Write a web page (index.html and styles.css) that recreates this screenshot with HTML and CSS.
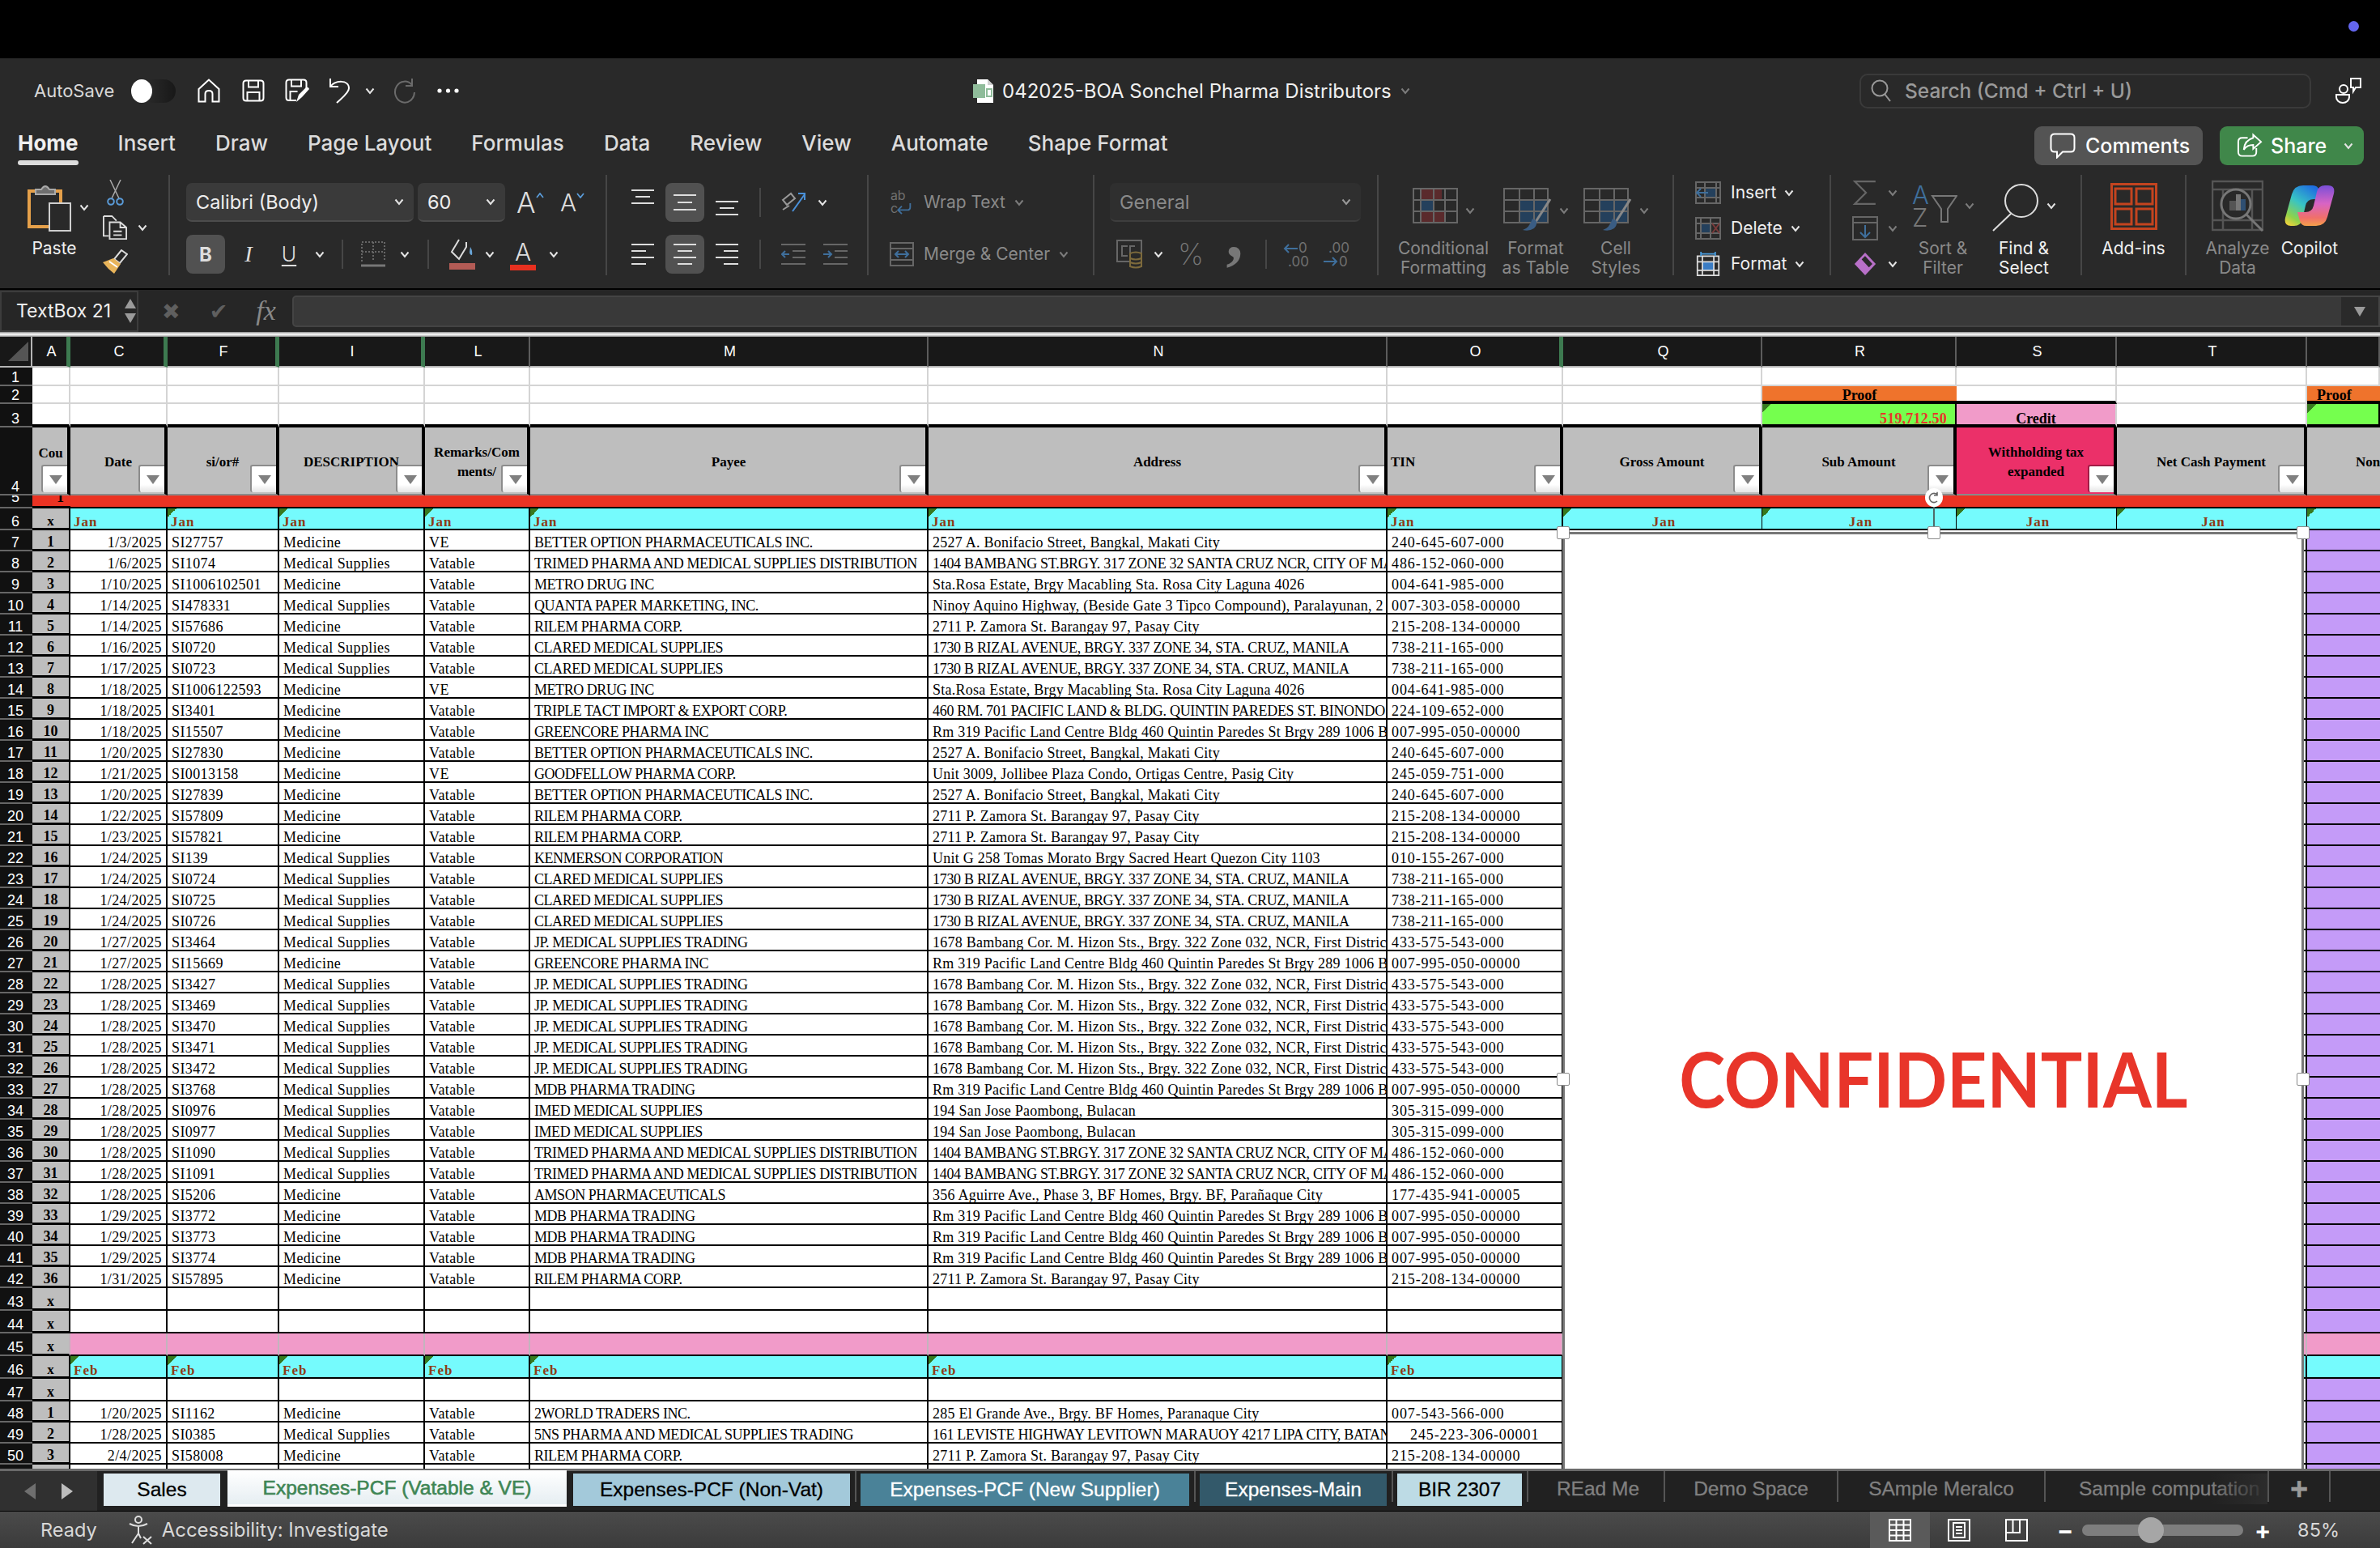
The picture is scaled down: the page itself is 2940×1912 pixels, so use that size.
FILE: index.html
```html
<!DOCTYPE html>
<html lang="en">
<head>
    <meta charset="UTF-8">
    <title>042025-BOA Sonchel Pharma Distributors</title>
    <link rel="stylesheet" href="styles.css">
</head>
<body>
    <!-- icon sprite -->
    <svg class="sprite" xmlns="http://www.w3.org/2000/svg">
        <defs>
            <linearGradient id="cpA" x1="0.7" y1="0" x2="0.1" y2="1"><stop offset="0" stop-color="#1f6fe0"/><stop offset="0.45" stop-color="#38c4c4"/><stop offset="0.8" stop-color="#8fd24a"/><stop offset="1" stop-color="#f4d23c"/></linearGradient>
            <linearGradient id="cpB" x1="0.5" y1="0" x2="0.5" y2="1"><stop offset="0" stop-color="#7a4fd8"/><stop offset="0.45" stop-color="#d864c4"/><stop offset="0.8" stop-color="#f0706a"/><stop offset="1" stop-color="#f5a04a"/></linearGradient>
        </defs>
        <symbol id="chev" viewBox="0 0 12 9"><path d="M1.5 1.5 6 7l4.5-5.5" fill="none" stroke="currentColor" stroke-width="2"/></symbol>
        <symbol id="home" viewBox="0 0 28 30"><path d="M1.5 13 14 1.5 26.500 13v15.500h-8V19q0-4-4.500-4t-4.500 4v9.500h-8z" fill="none" stroke="#fff" stroke-width="2"/></symbol>
        <symbol id="save" viewBox="0 0 28 28"><path d="M5 1.500h18q3.500 0 3.500 3.500v18q0 3.500-3.500 3.500H5q-3.500 0-3.500-3.500V5Q1.500 1.500 5 1.500zM8 1.500v8h12v-8M6.500 26.500V16h15v10.500" fill="none" stroke="#fff" stroke-width="2"/></symbol>
        <symbol id="saveas" viewBox="0 0 30 30"><path d="M14 27H5q-3.500 0-3.500-3.500V5Q1.500 1.500 5 1.500h18q3.500 0 3.500 3.500v7M8 1.500v8h12v-8M6.500 26V16h9" fill="none" stroke="#fff" stroke-width="2"/><path d="M14 29l3-9 9-9q3-1 4 2l-9 10z" fill="#fff"/></symbol>
        <symbol id="undo" viewBox="0 0 28 32"><path d="M2 1v10h10M2 11C8 3 25 2 25 13c0 6-10 13-15 18" fill="none" stroke="#fff" stroke-width="2"/></symbol>
        <symbol id="redo" viewBox="0 0 28 32"><path d="M23 9A12 13 0 1 0 26 18M23 1v9h-8" fill="none" stroke="#6a6a6a" stroke-width="2"/></symbol>
        <symbol id="dots" viewBox="0 0 27 6"><circle cx="3" cy="3" r="2.600" fill="#fff"/><circle cx="13.500" cy="3" r="2.600" fill="#fff"/><circle cx="24" cy="3" r="2.600" fill="#fff"/></symbol>
        <symbol id="xls" viewBox="0 0 25 29"><path d="M5 0h13l7 7v22H5z" fill="#fff"/><path d="M18 0l7 7h-7z" fill="#cfcfcf"/><path d="M0 6h15v17H0z" fill="#8fbc9a"/><path d="M17 12h6v9h-6z" fill="none" stroke="#8fbc9a" stroke-width="2"/></symbol>
        <symbol id="search" viewBox="0 0 26 28"><circle cx="11" cy="11" r="9.500" fill="none" stroke="#999" stroke-width="2"/><path d="M17 18l7 9" stroke="#999" stroke-width="2"/></symbol>
        <symbol id="people" viewBox="0 0 34 32"><circle cx="11" cy="14" r="5" fill="none" stroke="#fff" stroke-width="2"/><path d="M2 21h16v3a8 7 0 0 1-16 0z" fill="none" stroke="#fff" stroke-width="2"/><path d="M20 1h12v11h-6l-3 5v-5h-3z" fill="none" stroke="#fff" stroke-width="2"/></symbol>
        <symbol id="bubble" viewBox="0 0 32 32"><path d="M6 1.500h20q4.500 0 4.500 4.500v13q0 4.500-4.500 4.500H16l-7 7v-7H6q-4.500 0-4.500-4.500V6q0-4.500 4.500-4.500z" fill="none" stroke="#fff" stroke-width="2"/></symbol>
        <symbol id="share" viewBox="0 0 33 30"><path d="M14 5H7Q2 5 2 10v13q0 5 5 5h13q5 0 5-5v-5" fill="none" stroke="#fff" stroke-width="2"/><path d="M21 1l10 9-10 9v-5q-8 0-12 6 1-12 12-15z" fill="none" stroke="#fff" stroke-width="2"/></symbol>
        <symbol id="paste" viewBox="0 0 54 60"><path d="M10 10H2v44h25M32 10h9v14" fill="none" stroke="#e5a04a" stroke-width="4"/><path d="M10 14V8h7q5-8 10 0h7v6z" fill="#6f6f6f" stroke="#aaa" stroke-width="2"/><rect x="27" y="25" width="26" height="34" fill="#292929" stroke="#cfcfcf" stroke-width="2"/></symbol>
        <symbol id="cut" viewBox="0 0 21 32"><path d="M4 0l11 23M17 0 6 23" fill="none" stroke="#aaa" stroke-width="1.500"/><circle cx="5" cy="27" r="3.800" fill="none" stroke="#5a9bd8" stroke-width="2"/><circle cx="16" cy="27" r="3.800" fill="none" stroke="#5a9bd8" stroke-width="2"/></symbol>
        <symbol id="copy" viewBox="0 0 32 32"><path d="M1 1h11l6 6M1 1v26h7" fill="none" stroke="#ddd" stroke-width="2"/><path d="M9 9h14l8 7v15H9zM23 9v7h8M14 21h11M14 26h11" fill="none" stroke="#ddd" stroke-width="2"/></symbol>
        <symbol id="painter" viewBox="0 0 32 30"><path d="M24 1l7 5-9 11-7-5z" fill="none" stroke="#ddd" stroke-width="2"/><path d="M1 16l13-5 9 7-8 12q-8-6-14-14z" fill="#e8b45a"/><path d="M9 15l10 7" stroke="#fff" stroke-width="2"/></symbol>
        <symbol id="caret-up" viewBox="0 0 10 7"><path d="M1 6l4-5 4 5" fill="none" stroke="#5a9bd8" stroke-width="1.800"/></symbol>
        <symbol id="caret-dn" viewBox="0 0 10 7"><path d="M1 1l4 5 4-5" fill="none" stroke="#5a9bd8" stroke-width="1.800"/></symbol>
        <symbol id="borders" viewBox="0 0 30 32"><path d="M1 1h28M1 13h28M1 25V1M15 1v24M29 1v24" fill="none" stroke="#666" stroke-width="2" stroke-dasharray="2 2"/><path d="M0 30h30" stroke="#777" stroke-width="3"/></symbol>
        <symbol id="fill" viewBox="0 0 32 38"><path d="M12 1l-9 15 9 9 9-15V4" fill="none" stroke="#ddd" stroke-width="2"/><path d="M26 10q3 5 2 10-3 0-3-4z" fill="#6aa6d8"/><rect y="30" width="32" height="8" fill="#b35b55"/></symbol>
        <symbol id="va-top" viewBox="0 0 28 48"><path d="M0 9h28M5 17h18M0 25h28" stroke="#ddd" stroke-width="2"/></symbol>
        <symbol id="va-mid" viewBox="0 0 28 48"><path d="M0 15h28M5 24h18M0 33h28" stroke="#ddd" stroke-width="2"/></symbol>
        <symbol id="va-bot" viewBox="0 0 28 48"><path d="M0 23h28M5 31h18M0 39h28" stroke="#ddd" stroke-width="2"/></symbol>
        <symbol id="ha-left" viewBox="0 0 28 28"><path d="M0 2h28M0 10h18M0 18h28M0 26h18" stroke="#ddd" stroke-width="2"/></symbol>
        <symbol id="ha-mid" viewBox="0 0 28 28"><path d="M0 2h28M5 10h18M0 18h28M5 26h18" stroke="#ddd" stroke-width="2"/></symbol>
        <symbol id="ha-right" viewBox="0 0 28 28"><path d="M0 2h28M10 10h18M0 18h28M10 26h18" stroke="#ddd" stroke-width="2"/></symbol>
        <symbol id="orient" viewBox="0 0 32 30"><path d="M3 12l10-8 5 6-10 8zM3 24l8-5" fill="none" stroke="#999" stroke-width="2"/><path d="M15 26 30 5M22 4h8v8" fill="none" stroke="#4a90d8" stroke-width="2"/></symbol>
        <symbol id="ind-dec" viewBox="0 0 30 28"><path d="M0 2h30M14 10h16M14 18h16M0 26h30" stroke="#666" stroke-width="2"/><path d="M10 14H1M5 10l-4 4 4 4" fill="none" stroke="#3f6f9c" stroke-width="2"/></symbol>
        <symbol id="ind-inc" viewBox="0 0 30 28"><path d="M0 2h30M14 10h16M14 18h16M0 26h30" stroke="#666" stroke-width="2"/><path d="M0 14h9M6 10l4 4-4 4" fill="none" stroke="#3f6f9c" stroke-width="2"/></symbol>
        <symbol id="merge" viewBox="0 0 30 30"><rect x="1" y="1" width="28" height="28" fill="none" stroke="#666" stroke-width="2"/><path d="M1 8h28M1 22h28" stroke="#666" stroke-width="2"/><path d="M7 15h16M11 11l-4 4 4 4M19 11l4 4-4 4" fill="none" stroke="#3f6f9c" stroke-width="2"/></symbol>
        <symbol id="acct" viewBox="0 0 32 36"><rect x="1" y="1" width="30" height="26" fill="none" stroke="#666" stroke-width="2"/><path d="M14 8H7v12h7M23 8h-6v12h6" fill="none" stroke="#666" stroke-width="2"/><path d="M17 17q7-3 14 0v16q-7 3-14 0z" fill="#292929" stroke="#7d6a3c" stroke-width="2"/><path d="M17 23q7 3 14 0M17 28q7 3 14 0" fill="none" stroke="#7d6a3c" stroke-width="2"/></symbol>
        <symbol id="cond" viewBox="0 0 56 44"><path d="M10 1h26v14H10zM10 29h30v14H10z" fill="#5a2a2c"/><path d="M10 15h16v14H10z" fill="#24405c"/><path d="M1 1h54v42H1zM1 15h54M1 29h54M10 1v42M26 1v42M40 1v42" fill="none" stroke="#666" stroke-width="2"/></symbol>
        <symbol id="fmt-table" viewBox="0 0 60 54"><path d="M20 15h36v28H20z" fill="#24405c"/><path d="M1 1h54v42H1zM1 15h54M1 29h54M20 1v42M38 1v42" fill="none" stroke="#666" stroke-width="2"/><path d="M58 14 40 42" stroke="#888" stroke-width="3"/><path d="M36 38q-4 12-12 14 8 2 14-2 4-4 3-9z" fill="#3a5d84"/></symbol>
        <symbol id="cell-ins" viewBox="0 0 32 28"><path d="M12 8h14v12H12z" fill="#24405c"/><path d="M1 1h30v26H1zM1 8h30M1 20h30M12 1v26M26 1v26" fill="none" stroke="#666" stroke-width="2"/><path d="M16 14H2M7 9l-5 5 5 5" fill="none" stroke="#3f6f9c" stroke-width="2"/></symbol>
        <symbol id="cell-del" viewBox="0 0 32 28"><path d="M7 8h12v12H7z" fill="#24405c"/><path d="M1 1h30v26H1zM1 8h30M1 20h30M7 1v26M19 1v26" fill="none" stroke="#666" stroke-width="2"/><path d="M21 8l9 12M30 8l-9 12" stroke="#7a3a3a" stroke-width="2"/></symbol>
        <symbol id="cell-fmt" viewBox="0 0 32 34"><path d="M8 14h16v12H8z" fill="#3a7cc4"/><path d="M1 6h30v27H1zM1 14h30M1 26h30M8 6v27M24 6v27" fill="none" stroke="#ddd" stroke-width="2"/><path d="M6 3h20M6 0v6M26 0v6" fill="none" stroke="#4a9ee0" stroke-width="2"/></symbol>
        <symbol id="sigma" viewBox="0 0 26 28"><path d="M25 1H1l13 13L1 27h24" fill="none" stroke="#666" stroke-width="2"/></symbol>
        <symbol id="filldown" viewBox="0 0 32 30"><path d="M1 1h30v28H1zM1 8h30" fill="none" stroke="#666" stroke-width="2"/><path d="M16 11v15M10 20l6 6 6-6" fill="none" stroke="#3f6f9c" stroke-width="2"/></symbol>
        <symbol id="eraser" viewBox="0 0 30 32"><path d="M15 1l14 15-14 15L1 16z" fill="#b870c8"/><path d="M15 4l11 12-6 6L9 10z" fill="#292929" stroke="#b870c8" stroke-width="2"/></symbol>
        <symbol id="find" viewBox="0 0 58 60"><circle cx="36" cy="22" r="20" fill="none" stroke="#ddd" stroke-width="2"/><path d="M23 38 1 59" stroke="#ddd" stroke-width="2"/></symbol>
        <symbol id="addins" viewBox="0 0 58 58"><path d="M1.500 1.500h55v55h-55zM6 7h20v19H6zM32 7h20v19H32zM6 32h20v19H6zM32 32h20v19H32z" fill="none" stroke="#c4441f" stroke-width="3"/></symbol>
        <symbol id="analyze" viewBox="0 0 64 64"><path d="M1 2h62v60H1zM1 12h62M1 50h62M14 12v50M50 12v50" fill="none" stroke="#555" stroke-width="2.500"/><circle cx="30" cy="30" r="18" fill="#292929" stroke="#777" stroke-width="3"/><path d="M22 26h8v12h-8z" fill="#555"/><path d="M30 18h6v20h-6z" fill="#777"/><path d="M36 24h6v14h-6z" fill="#2f4f72"/><path d="M43 43l20 20" stroke="#777" stroke-width="3"/></symbol>
        <symbol id="copilot" viewBox="0 0 62 52"><path d="M23 1h12q6 0 8 6l3 11H36q-8 0-10 8l-4 17q-2 8-10 8H8Q-1 51 1 41L9 12Q12 1 23 1z" fill="url(#cpA)"/><path d="M39 51H27q-6 0-8-6l-3-11h10q8 0 10-8l4-17q2-8 10-8h4q9 0 7 10l-8 29q-3 11-14 11z" fill="url(#cpB)"/></symbol>
        <symbol id="access" viewBox="0 0 32 36"><circle cx="13" cy="5" r="4" fill="none" stroke="#ddd" stroke-width="2"/><path d="M2 10q11 6 22 0M13 12v10l-8 12M13 22l3 6" fill="none" stroke="#ddd" stroke-width="2"/><path d="M19 26l10 9M29 26l-10 9" stroke="#ddd" stroke-width="2"/></symbol>
        <symbol id="v-grid" viewBox="0 0 28 28"><path d="M1 1h26v26H1zM1 7.500h26M1 14h26M1 20.500h26M9.500 1v26M18.500 1v26" fill="none" stroke="#fff" stroke-width="2"/></symbol>
        <symbol id="v-page" viewBox="0 0 28 28"><path d="M1 1h26v26H1zM7 5h14v18H7zM10 10h8M10 14h8M10 18h8" fill="none" stroke="#fff" stroke-width="2"/></symbol>
        <symbol id="v-break" viewBox="0 0 28 28"><path d="M1 1h26v26H1zM1 17h17V1M9.500 1v16" fill="none" stroke="#fff" stroke-width="2"/></symbol>
        <symbol id="rotate" viewBox="0 0 20 20"><path d="M15 5A7 7 0 1 0 15 15M15 1v5h-5" fill="none" stroke="#666" stroke-width="2"/></symbol>
    </svg>

    <div class="topbar"><span class="dot"></span></div>

    <!-- autosave row -->
    <div class="qat">
        <div class="qat-left">
            <span class="autosave">AutoSave</span>
            <span class="toggle"><i></i></span>
            <svg class="q-home"><use href="#home"/></svg>
            <svg class="q-save"><use href="#save"/></svg>
            <svg class="q-saveas"><use href="#saveas"/></svg>
            <svg class="q-undo"><use href="#undo"/></svg>
            <svg class="chev q-chev"><use href="#chev"/></svg>
            <svg class="q-redo"><use href="#redo"/></svg>
            <svg class="q-dots"><use href="#dots"/></svg>
        </div>
        <div class="title">
            <svg class="t-xls"><use href="#xls"/></svg>
            <span>042025-BOA Sonchel Pharma Distributors</span>
            <svg class="chev dim"><use href="#chev"/></svg>
        </div>
        <div class="searchbox">
            <svg class="s-ic"><use href="#search"/></svg>
            <span>Search (Cmd + Ctrl + U)</span>
        </div>
        <svg class="q-people"><use href="#people"/></svg>
    </div>

    <!-- ribbon tabs -->
    <div class="tabs">
        <span class="tab on">Home</span>
        <span class="tab">Insert</span>
        <span class="tab">Draw</span>
        <span class="tab">Page Layout</span>
        <span class="tab">Formulas</span>
        <span class="tab">Data</span>
        <span class="tab">Review</span>
        <span class="tab">View</span>
        <span class="tab">Automate</span>
        <span class="tab">Shape Format</span>
        <div class="tab-right">
            <div class="btn-comments"><svg class="b-ic"><use href="#bubble"/></svg><span>Comments</span></div>
            <div class="btn-share"><svg class="b-ic"><use href="#share"/></svg><span>Share</span><svg class="chev"><use href="#chev"/></svg></div>
        </div>
    </div>

    <!-- ribbon -->
    <div class="ribbon">
        <div class="g g-clip">
            <div class="paste">
                <div class="paste-top"><svg class="i-paste"><use href="#paste"/></svg><svg class="chev"><use href="#chev"/></svg></div>
                <span class="lbl on paste-lbl">Paste</span>
            </div>
            <div class="tools">
                <svg class="i-cut"><use href="#cut"/></svg>
                <div class="tool-row"><svg class="i-32"><use href="#copy"/></svg><svg class="chev"><use href="#chev"/></svg></div>
                <svg class="i-painter"><use href="#painter"/></svg>
            </div>
        </div>

        <div class="g g-font">
            <div class="row">
                <div class="combo w281"><span>Calibri (Body)</span><svg class="chev"><use href="#chev"/></svg></div>
                <div class="combo w108"><span>60</span><svg class="chev"><use href="#chev"/></svg></div>
                <div class="size-a grow"><span>A</span><svg class="i-caret"><use href="#caret-up"/></svg></div>
                <div class="size-a shrink"><span>A</span><svg class="i-caret"><use href="#caret-dn"/></svg></div>
            </div>
            <div class="row font-tools">
                <span class="tbtn act f-b">B</span>
                <span class="f-i">I</span>
                <span class="f-u">U</span>
                <svg class="chev"><use href="#chev"/></svg>
                <i class="vsep"></i>
                <svg class="i-borders"><use href="#borders"/></svg>
                <svg class="chev"><use href="#chev"/></svg>
                <i class="vsep"></i>
                <svg class="i-fill"><use href="#fill"/></svg>
                <svg class="chev"><use href="#chev"/></svg>
                <span class="f-color">A</span>
                <svg class="chev"><use href="#chev"/></svg>
            </div>
        </div>

        <div class="g g-align">
            <div class="row align-row">
                <svg class="i-va"><use href="#va-top"/></svg>
                <span class="tbtn act"><svg class="i-va"><use href="#va-mid"/></svg></span>
                <svg class="i-va"><use href="#va-bot"/></svg>
                <i class="vsep"></i>
                <svg class="i-orient"><use href="#orient"/></svg>
                <svg class="chev left"><use href="#chev"/></svg>
            </div>
            <div class="row align-row">
                <svg class="i-ha"><use href="#ha-left"/></svg>
                <span class="tbtn act"><svg class="i-ha"><use href="#ha-mid"/></svg></span>
                <svg class="i-ha"><use href="#ha-right"/></svg>
                <i class="vsep"></i>
                <svg class="i-ind"><use href="#ind-dec"/></svg>
                <svg class="i-ind"><use href="#ind-inc"/></svg>
            </div>
        </div>

        <div class="g g-wrap">
            <div class="row wrapline">
                <svg class="i-30" viewBox="0 0 30 34"><text x="0" y="14" class="ic-txt">ab</text><text x="0" y="31" class="ic-txt">c</text><path d="M26 18v5q0 4-4 4H11M15 22l-5 5 5 5" fill="none" stroke="#3f6f9c" stroke-width="2"/></svg>
                <span class="lbl">Wrap Text</span><svg class="chev dim"><use href="#chev"/></svg>
            </div>
            <div class="row wrapline"><svg class="i-30"><use href="#merge"/></svg><span class="lbl">Merge &amp; Center</span><svg class="chev dim"><use href="#chev"/></svg></div>
        </div>

        <div class="g g-num">
            <div class="row"><div class="combo general"><span>General</span><svg class="chev"><use href="#chev"/></svg></div></div>
            <div class="row num-tools">
                <svg class="i-acct"><use href="#acct"/></svg>
                <svg class="chev"><use href="#chev"/></svg>
                <span class="n-pct">%</span>
                <span class="n-comma">,</span>
                <i class="vsep"></i>
                <svg class="i-dec" viewBox="0 0 34 34"><path d="M18 10H2M7 5l-5 5 5 5" fill="none" stroke="#3f6f9c" stroke-width="2"/><text x="19" y="15" class="ic-txt">0</text><text x="6" y="32" class="ic-txt">.00</text></svg>
                <svg class="i-dec" viewBox="0 0 34 34"><text x="6" y="15" class="ic-txt">.00</text><path d="M0 26h16M11 21l5 5-5 5" fill="none" stroke="#3f6f9c" stroke-width="2"/><text x="19" y="32" class="ic-txt">0</text></svg>
            </div>
        </div>

        <div class="g g-styles">
            <div class="big w114">
                <div class="big-ic low"><svg class="i-cond"><use href="#cond"/></svg><svg class="chev dim"><use href="#chev"/></svg></div>
                <span class="lbl">Conditional<br>Formatting</span>
            </div>
            <div class="big w114">
                <div class="big-ic low"><svg class="i-table"><use href="#fmt-table"/></svg><svg class="chev dim"><use href="#chev"/></svg></div>
                <span class="lbl">Format<br>as Table</span>
            </div>
            <div class="big w84">
                <div class="big-ic low"><svg class="i-table"><use href="#fmt-table"/></svg><svg class="chev dim"><use href="#chev"/></svg></div>
                <span class="lbl">Cell<br>Styles</span>
            </div>
        </div>

        <div class="g g-cells">
            <div class="cellrow"><svg class="i-32"><use href="#cell-ins"/></svg><span class="lbl on">Insert</span><svg class="chev"><use href="#chev"/></svg></div>
            <div class="cellrow"><svg class="i-32"><use href="#cell-del"/></svg><span class="lbl on">Delete</span><svg class="chev"><use href="#chev"/></svg></div>
            <div class="cellrow"><svg class="i-32"><use href="#cell-fmt"/></svg><span class="lbl on">Format</span><svg class="chev"><use href="#chev"/></svg></div>
        </div>

        <div class="g g-edit">
            <div class="edit-small">
                <div class="cellrow"><svg class="i-32"><use href="#sigma"/></svg><svg class="chev dim"><use href="#chev"/></svg></div>
                <div class="cellrow"><svg class="i-32"><use href="#filldown"/></svg><svg class="chev dim"><use href="#chev"/></svg></div>
                <div class="cellrow"><svg class="i-32"><use href="#eraser"/></svg><svg class="chev"><use href="#chev"/></svg></div>
            </div>
            <div class="big w100">
                <div class="big-ic">
                    <svg class="i-sort" viewBox="0 0 56 54"><text x="0" y="24" class="ic-sort az-a">A</text><text x="0" y="52" class="ic-sort az-z">Z</text><path d="M25 14h30L44 30v16h-8V30z" fill="none" stroke="#777" stroke-width="2"/></svg>
                    <svg class="chev dim"><use href="#chev"/></svg>
                </div>
                <span class="lbl">Sort &amp;<br>Filter</span>
            </div>
            <div class="big w100">
                <div class="big-ic"><svg class="i-find"><use href="#find"/></svg><svg class="chev"><use href="#chev"/></svg></div>
                <span class="lbl on">Find &amp;<br>Select</span>
            </div>
        </div>

        <div class="g g-addins">
            <div class="big">
                <div class="big-ic"><svg class="i-addins"><use href="#addins"/></svg></div>
                <span class="lbl on">Add-ins</span>
            </div>
        </div>

        <div class="g g-last">
            <div class="big w96">
                <div class="big-ic"><svg class="i-analyze"><use href="#analyze"/></svg></div>
                <span class="lbl">Analyze<br>Data</span>
            </div>
            <div class="big w82">
                <div class="big-ic"><svg class="i-copilot"><use href="#copilot"/></svg></div>
                <span class="lbl on">Copilot</span>
            </div>
        </div>
    </div>

    <!-- formula bar -->
    <div class="fbar">
        <div class="namebox"><span>TextBox 21</span><span class="spin"><i class="up"></i><i class="dn"></i></span></div>
        <span class="fb-x">✖</span>
        <span class="fb-ok">✔</span>
        <span class="fb-fx">fx</span>
        <div class="fb-input"><span class="fb-drop"><i class="dn"></i></span></div>
    </div>
    <div class="splitline"></div>

    <!-- worksheet -->
    <div class="sheet">
        <table class="grid">
            <colgroup>
                <col class="c-rn"><col class="c-a"><col class="c-c"><col class="c-f"><col class="c-i"><col class="c-l"><col class="c-m"><col class="c-n"><col class="c-o"><col class="c-q"><col class="c-r"><col class="c-s"><col class="c-t"><col class="c-u">
            </colgroup>
            <thead>
                <tr>
                    <th class="corner"><svg class="i-corner" viewBox="0 0 25 24"><path d="M25 0v24H0z" fill="#555"/></svg></th>
                    <th class="sel">A</th><th class="sel">C</th><th class="sel">F</th><th class="sel">I</th><th>L</th><th>M</th><th>N</th><th class="sel">O</th><th>Q</th><th>R</th><th>S</th><th>T</th><th></th>
                </tr>
            </thead>
            <tbody>
                <tr class="blank r1"><th>1</th><td></td><td></td><td></td><td></td><td></td><td></td><td></td><td></td><td></td><td></td><td></td><td></td><td></td></tr>
                <tr class="blank r2"><th>2</th><td></td><td></td><td></td><td></td><td></td><td></td><td></td><td></td><td></td><td class="proof">Proof</td><td class="topline"></td><td></td><td class="proof left">Proof</td></tr>
                <tr class="blank r3"><th>3</th><td></td><td></td><td></td><td></td><td></td><td></td><td></td><td></td><td></td><td class="green tri">519,712.50</td><td class="credit">Credit</td><td></td><td class="green tri"></td></tr>
                <tr class="heads">
                    <th>4</th>
                    <td>Cou<br>nt<span class="fbtn"></span></td>
                    <td>Date<span class="fbtn"></span></td>
                    <td>si/or#<span class="fbtn"></span></td>
                    <td>DESCRIPTION<span class="fbtn"></span></td>
                    <td>Remarks/Com<br>ments/<span class="fbtn"></span></td>
                    <td>Payee<span class="fbtn"></span></td>
                    <td>Address<span class="fbtn"></span></td>
                    <td class="left">TIN<span class="fbtn"></span></td>
                    <td>Gross Amount<span class="fbtn"></span></td>
                    <td>Sub Amount<span class="fbtn"></span></td>
                    <td class="wtax">Withholding tax<br>expanded<span class="fbtn"></span></td>
                    <td>Net Cash Payment<span class="fbtn"></span></td>
                    <td class="left non">Non</td>
                </tr>
                <tr class="redrow"><th>5</th><td class="redcount">1</td><td colspan="12"></td></tr>
                <tr class="month">
                    <th>6</th><td class="cnt">x</td><td>Jan</td><td class="tri">Jan</td><td class="tri">Jan</td><td class="tri">Jan</td><td class="tri">Jan</td><td class="tri">Jan</td><td class="tri">Jan</td><td class="tri ctr">Jan</td><td class="tri ctr">Jan</td><td class="tri ctr">Jan</td><td class="tri ctr">Jan</td><td class="tri"></td>
                </tr>
                <tr class="data"><th>7</th><td>1</td><td>1/3/2025</td><td>SI27757</td><td>Medicine</td><td>VE</td><td>BETTER OPTION PHARMACEUTICALS INC.</td><td>2527 A. Bonifacio Street, Bangkal, Makati City</td><td>240-645-607-000</td><td colspan="4"></td><td></td></tr>
                <tr class="data"><th>8</th><td>2</td><td>1/6/2025</td><td>SI1074</td><td>Medical Supplies</td><td>Vatable</td><td>TRIMED PHARMA AND MEDICAL SUPPLIES DISTRIBUTION</td><td class="caps">1404 BAMBANG ST.BRGY. 317 ZONE 32 SANTA CRUZ NCR, CITY OF MANILA</td><td>486-152-060-000</td><td colspan="4"></td><td></td></tr>
                <tr class="data"><th>9</th><td>3</td><td>1/10/2025</td><td>SI1006102501</td><td>Medicine</td><td>Vatable</td><td>METRO DRUG INC</td><td>Sta.Rosa Estate, Brgy Macabling Sta. Rosa City Laguna 4026</td><td>004-641-985-000</td><td colspan="4"></td><td></td></tr>
                <tr class="data"><th>10</th><td>4</td><td>1/14/2025</td><td>SI478331</td><td>Medical Supplies</td><td>Vatable</td><td>QUANTA PAPER MARKETING, INC.</td><td>Ninoy Aquino Highway, (Beside Gate 3 Tipco Compound), Paralayunan, 2</td><td>007-303-058-00000</td><td colspan="4"></td><td></td></tr>
                <tr class="data"><th>11</th><td>5</td><td>1/14/2025</td><td>SI57686</td><td>Medicine</td><td>Vatable</td><td>RILEM PHARMA CORP.</td><td>2711 P. Zamora St. Barangay 97, Pasay City</td><td>215-208-134-00000</td><td colspan="4"></td><td></td></tr>
                <tr class="data"><th>12</th><td>6</td><td>1/16/2025</td><td>SI0720</td><td>Medical Supplies</td><td>Vatable</td><td>CLARED MEDICAL SUPPLIES</td><td class="caps">1730 B RIZAL AVENUE, BRGY. 337 ZONE 34, STA. CRUZ, MANILA</td><td>738-211-165-000</td><td colspan="4"></td><td></td></tr>
                <tr class="data"><th>13</th><td>7</td><td>1/17/2025</td><td>SI0723</td><td>Medical Supplies</td><td>Vatable</td><td>CLARED MEDICAL SUPPLIES</td><td class="caps">1730 B RIZAL AVENUE, BRGY. 337 ZONE 34, STA. CRUZ, MANILA</td><td>738-211-165-000</td><td colspan="4"></td><td></td></tr>
                <tr class="data"><th>14</th><td>8</td><td>1/18/2025</td><td>SI1006122593</td><td>Medicine</td><td>VE</td><td>METRO DRUG INC</td><td>Sta.Rosa Estate, Brgy Macabling Sta. Rosa City Laguna 4026</td><td>004-641-985-000</td><td colspan="4"></td><td></td></tr>
                <tr class="data"><th>15</th><td>9</td><td>1/18/2025</td><td>SI3401</td><td>Medicine</td><td>Vatable</td><td>TRIPLE TACT IMPORT &amp; EXPORT CORP.</td><td class="caps">460 RM. 701 PACIFIC LAND &amp; BLDG. QUINTIN PAREDES ST. BINONDO</td><td>224-109-652-000</td><td colspan="4"></td><td></td></tr>
                <tr class="data"><th>16</th><td>10</td><td>1/18/2025</td><td>SI15507</td><td>Medicine</td><td>Vatable</td><td>GREENCORE PHARMA INC</td><td>Rm 319 Pacific Land Centre Bldg 460 Quintin Paredes St Brgy 289 1006 Binondo</td><td>007-995-050-00000</td><td colspan="4"></td><td></td></tr>
                <tr class="data"><th>17</th><td>11</td><td>1/20/2025</td><td>SI27830</td><td>Medicine</td><td>Vatable</td><td>BETTER OPTION PHARMACEUTICALS INC.</td><td>2527 A. Bonifacio Street, Bangkal, Makati City</td><td>240-645-607-000</td><td colspan="4"></td><td></td></tr>
                <tr class="data"><th>18</th><td>12</td><td>1/21/2025</td><td>SI0013158</td><td>Medicine</td><td>VE</td><td>GOODFELLOW PHARMA CORP.</td><td>Unit 3009, Jollibee Plaza Condo, Ortigas Centre, Pasig City</td><td>245-059-751-000</td><td colspan="4"></td><td></td></tr>
                <tr class="data"><th>19</th><td>13</td><td>1/20/2025</td><td>SI27839</td><td>Medicine</td><td>Vatable</td><td>BETTER OPTION PHARMACEUTICALS INC.</td><td>2527 A. Bonifacio Street, Bangkal, Makati City</td><td>240-645-607-000</td><td colspan="4"></td><td></td></tr>
                <tr class="data"><th>20</th><td>14</td><td>1/22/2025</td><td>SI57809</td><td>Medicine</td><td>Vatable</td><td>RILEM PHARMA CORP.</td><td>2711 P. Zamora St. Barangay 97, Pasay City</td><td>215-208-134-00000</td><td colspan="4"></td><td></td></tr>
                <tr class="data"><th>21</th><td>15</td><td>1/23/2025</td><td>SI57821</td><td>Medicine</td><td>Vatable</td><td>RILEM PHARMA CORP.</td><td>2711 P. Zamora St. Barangay 97, Pasay City</td><td>215-208-134-00000</td><td colspan="4"></td><td></td></tr>
                <tr class="data"><th>22</th><td>16</td><td>1/24/2025</td><td>SI139</td><td>Medical Supplies</td><td>Vatable</td><td>KENMERSON CORPORATION</td><td>Unit G 258 Tomas Morato Brgy Sacred Heart Quezon City 1103</td><td>010-155-267-000</td><td colspan="4"></td><td></td></tr>
                <tr class="data"><th>23</th><td>17</td><td>1/24/2025</td><td>SI0724</td><td>Medical Supplies</td><td>Vatable</td><td>CLARED MEDICAL SUPPLIES</td><td class="caps">1730 B RIZAL AVENUE, BRGY. 337 ZONE 34, STA. CRUZ, MANILA</td><td>738-211-165-000</td><td colspan="4"></td><td></td></tr>
                <tr class="data"><th>24</th><td>18</td><td>1/24/2025</td><td>SI0725</td><td>Medical Supplies</td><td>Vatable</td><td>CLARED MEDICAL SUPPLIES</td><td class="caps">1730 B RIZAL AVENUE, BRGY. 337 ZONE 34, STA. CRUZ, MANILA</td><td>738-211-165-000</td><td colspan="4"></td><td></td></tr>
                <tr class="data"><th>25</th><td>19</td><td>1/24/2025</td><td>SI0726</td><td>Medical Supplies</td><td>Vatable</td><td>CLARED MEDICAL SUPPLIES</td><td class="caps">1730 B RIZAL AVENUE, BRGY. 337 ZONE 34, STA. CRUZ, MANILA</td><td>738-211-165-000</td><td colspan="4"></td><td></td></tr>
                <tr class="data"><th>26</th><td>20</td><td>1/27/2025</td><td>SI3464</td><td>Medical Supplies</td><td>Vatable</td><td>JP. MEDICAL SUPPLIES TRADING</td><td>1678 Bambang Cor. M. Hizon Sts., Brgy. 322 Zone 032, NCR, First District</td><td>433-575-543-000</td><td colspan="4"></td><td></td></tr>
                <tr class="data"><th>27</th><td>21</td><td>1/27/2025</td><td>SI15669</td><td>Medicine</td><td>Vatable</td><td>GREENCORE PHARMA INC</td><td>Rm 319 Pacific Land Centre Bldg 460 Quintin Paredes St Brgy 289 1006 Binondo</td><td>007-995-050-00000</td><td colspan="4"></td><td></td></tr>
                <tr class="data"><th>28</th><td>22</td><td>1/28/2025</td><td>SI3427</td><td>Medical Supplies</td><td>Vatable</td><td>JP. MEDICAL SUPPLIES TRADING</td><td>1678 Bambang Cor. M. Hizon Sts., Brgy. 322 Zone 032, NCR, First District</td><td>433-575-543-000</td><td colspan="4"></td><td></td></tr>
                <tr class="data"><th>29</th><td>23</td><td>1/28/2025</td><td>SI3469</td><td>Medical Supplies</td><td>Vatable</td><td>JP. MEDICAL SUPPLIES TRADING</td><td>1678 Bambang Cor. M. Hizon Sts., Brgy. 322 Zone 032, NCR, First District</td><td>433-575-543-000</td><td colspan="4"></td><td></td></tr>
                <tr class="data"><th>30</th><td>24</td><td>1/28/2025</td><td>SI3470</td><td>Medical Supplies</td><td>Vatable</td><td>JP. MEDICAL SUPPLIES TRADING</td><td>1678 Bambang Cor. M. Hizon Sts., Brgy. 322 Zone 032, NCR, First District</td><td>433-575-543-000</td><td colspan="4"></td><td></td></tr>
                <tr class="data"><th>31</th><td>25</td><td>1/28/2025</td><td>SI3471</td><td>Medical Supplies</td><td>Vatable</td><td>JP. MEDICAL SUPPLIES TRADING</td><td>1678 Bambang Cor. M. Hizon Sts., Brgy. 322 Zone 032, NCR, First District</td><td>433-575-543-000</td><td colspan="4"></td><td></td></tr>
                <tr class="data"><th>32</th><td>26</td><td>1/28/2025</td><td>SI3472</td><td>Medical Supplies</td><td>Vatable</td><td>JP. MEDICAL SUPPLIES TRADING</td><td>1678 Bambang Cor. M. Hizon Sts., Brgy. 322 Zone 032, NCR, First District</td><td>433-575-543-000</td><td colspan="4"></td><td></td></tr>
                <tr class="data"><th>33</th><td>27</td><td>1/28/2025</td><td>SI3768</td><td>Medical Supplies</td><td>Vatable</td><td>MDB PHARMA TRADING</td><td>Rm 319 Pacific Land Centre Bldg 460 Quintin Paredes St Brgy 289 1006 Binondo</td><td>007-995-050-00000</td><td colspan="4"></td><td></td></tr>
                <tr class="data"><th>34</th><td>28</td><td>1/28/2025</td><td>SI0976</td><td>Medical Supplies</td><td>Vatable</td><td>IMED MEDICAL SUPPLIES</td><td>194 San Jose Paombong, Bulacan</td><td>305-315-099-000</td><td colspan="4"></td><td></td></tr>
                <tr class="data"><th>35</th><td>29</td><td>1/28/2025</td><td>SI0977</td><td>Medical Supplies</td><td>Vatable</td><td>IMED MEDICAL SUPPLIES</td><td>194 San Jose Paombong, Bulacan</td><td>305-315-099-000</td><td colspan="4"></td><td></td></tr>
                <tr class="data"><th>36</th><td>30</td><td>1/28/2025</td><td>SI1090</td><td>Medical Supplies</td><td>Vatable</td><td>TRIMED PHARMA AND MEDICAL SUPPLIES DISTRIBUTION</td><td class="caps">1404 BAMBANG ST.BRGY. 317 ZONE 32 SANTA CRUZ NCR, CITY OF MANILA</td><td>486-152-060-000</td><td colspan="4"></td><td></td></tr>
                <tr class="data"><th>37</th><td>31</td><td>1/28/2025</td><td>SI1091</td><td>Medical Supplies</td><td>Vatable</td><td>TRIMED PHARMA AND MEDICAL SUPPLIES DISTRIBUTION</td><td class="caps">1404 BAMBANG ST.BRGY. 317 ZONE 32 SANTA CRUZ NCR, CITY OF MANILA</td><td>486-152-060-000</td><td colspan="4"></td><td></td></tr>
                <tr class="data"><th>38</th><td>32</td><td>1/28/2025</td><td>SI5206</td><td>Medicine</td><td>Vatable</td><td>AMSON PHARMACEUTICALS</td><td>356 Aguirre Ave., Phase 3, BF Homes, Brgy. BF, Parañaque City</td><td>177-435-941-00005</td><td colspan="4"></td><td></td></tr>
                <tr class="data"><th>39</th><td>33</td><td>1/29/2025</td><td>SI3772</td><td>Medicine</td><td>Vatable</td><td>MDB PHARMA TRADING</td><td>Rm 319 Pacific Land Centre Bldg 460 Quintin Paredes St Brgy 289 1006 Binondo</td><td>007-995-050-00000</td><td colspan="4"></td><td></td></tr>
                <tr class="data"><th>40</th><td>34</td><td>1/29/2025</td><td>SI3773</td><td>Medicine</td><td>Vatable</td><td>MDB PHARMA TRADING</td><td>Rm 319 Pacific Land Centre Bldg 460 Quintin Paredes St Brgy 289 1006 Binondo</td><td>007-995-050-00000</td><td colspan="4"></td><td></td></tr>
                <tr class="data"><th>41</th><td>35</td><td>1/29/2025</td><td>SI3774</td><td>Medicine</td><td>Vatable</td><td>MDB PHARMA TRADING</td><td>Rm 319 Pacific Land Centre Bldg 460 Quintin Paredes St Brgy 289 1006 Binondo</td><td>007-995-050-00000</td><td colspan="4"></td><td></td></tr>
                <tr class="data"><th>42</th><td>36</td><td>1/31/2025</td><td>SI57895</td><td>Medicine</td><td>Vatable</td><td>RILEM PHARMA CORP.</td><td>2711 P. Zamora St. Barangay 97, Pasay City</td><td>215-208-134-00000</td><td colspan="4"></td><td></td></tr>
                <tr class="data tall"><th>43</th><td>x</td><td></td><td></td><td></td><td></td><td></td><td></td><td></td><td colspan="4"></td><td></td></tr>
                <tr class="data tall"><th>44</th><td>x</td><td></td><td></td><td></td><td></td><td></td><td></td><td></td><td colspan="4"></td><td></td></tr>
                <tr class="data tall pink"><th>45</th><td>x</td><td></td><td></td><td></td><td></td><td></td><td></td><td></td><td colspan="4"></td><td class="tri"></td></tr>
                <tr class="month tall"><th>46</th><td class="cnt">x</td><td class="tri">Feb</td><td class="tri">Feb</td><td class="tri">Feb</td><td class="tri">Feb</td><td class="tri">Feb</td><td class="tri">Feb</td><td class="tri">Feb</td><td colspan="4"></td><td></td></tr>
                <tr class="data tall"><th>47</th><td>x</td><td></td><td></td><td></td><td></td><td></td><td></td><td></td><td colspan="4"></td><td></td></tr>
                <tr class="data"><th>48</th><td>1</td><td>1/20/2025</td><td>SI1162</td><td>Medicine</td><td>Vatable</td><td>2WORLD TRADERS INC.</td><td>285 El Grande Ave., Brgy. BF Homes, Paranaque City</td><td>007-543-566-000</td><td colspan="4"></td><td></td></tr>
                <tr class="data"><th>49</th><td>2</td><td>1/28/2025</td><td>SI0385</td><td>Medical Supplies</td><td>Vatable</td><td>5NS PHARMA AND MEDICAL SUPPLIES TRADING</td><td class="caps">161 LEVISTE HIGHWAY LEVITOWN MARAUOY 4217 LIPA CITY, BATANGAS</td><td class="indent">245-223-306-00001</td><td colspan="4"></td><td></td></tr>
                <tr class="data"><th>50</th><td>3</td><td>2/4/2025</td><td>SI58008</td><td>Medicine</td><td>Vatable</td><td>RILEM PHARMA CORP.</td><td>2711 P. Zamora St. Barangay 97, Pasay City</td><td>215-208-134-00000</td><td colspan="4"></td><td></td></tr>
                <tr class="data stub"><th></th><td></td><td></td><td></td><td></td><td></td><td></td><td></td><td></td><td colspan="4"></td><td></td></tr>
            </tbody>
        </table>

        <!-- selected text box on top of the sheet -->
        <div class="textbox">
            <span class="confidential">CONFIDENTIAL</span>
            <i class="hd tl"></i><i class="hd tc"></i><i class="hd tr"></i><i class="hd ml"></i><i class="hd mr"></i>
            <i class="stem"></i>
            <span class="rot"><svg class="i-rot"><use href="#rotate"/></svg></span>
        </div>
    </div>

    <!-- sheet tabs -->
    <div class="sheettabs">
        <div class="nav"><i class="arr-l"></i><i class="arr-r"></i></div>
        <span class="stab w-sales">Sales</span>
        <span class="stab active">Expenses-PCF (Vatable &amp; VE)</span>
        <span class="stab w-nonvat">Expenses-PCF (Non-Vat)</span>
        <i class="tabsep"></i>
        <span class="stab w-new">Expenses-PCF (New Supplier)</span>
        <i class="tabsep"></i>
        <span class="stab w-main">Expenses-Main</span>
        <i class="tabsep"></i>
        <span class="stab w-bir">BIR 2307</span>
        <i class="tabsep"></i>
        <span class="ptab w168">REad Me</span>
        <i class="tabsep flat"></i>
        <span class="ptab w214">Demo Space</span>
        <i class="tabsep flat"></i>
        <span class="ptab w256">SAmple Meralco</span>
        <i class="tabsep flat"></i>
        <span class="ptab w276 fade">Sample computation</span>
        <i class="tabsep flat"></i>
        <span class="ptab w76 plus">+</span>
        <i class="tabsep flat"></i>
    </div>

    <!-- status bar -->
    <div class="status">
        <span class="st-ready">Ready</span>
        <svg class="i-access"><use href="#access"/></svg>
        <span class="st-acc">Accessibility: Investigate</span>
        <div class="views">
            <span class="view on"><svg class="i-view"><use href="#v-grid"/></svg></span>
            <span class="view"><svg class="i-view"><use href="#v-page"/></svg></span>
            <span class="view"><svg class="i-view"><use href="#v-break"/></svg></span>
        </div>
        <span class="zm">−</span>
        <div class="slider"><i></i></div>
        <span class="zm">+</span>
        <span class="pct">85%</span>
    </div>
</body>
</html>
```

FILE: styles.css
```css
* {
    box-sizing: border-box;
}
html, body {
    margin: 0;
    width: 2940px;
    height: 1912px;
    overflow: hidden;
    background: #000;
    font-family: Inter, "Noto Sans", sans-serif;
    color: #ddd;
}
svg {
    display: block;
    flex: none;
}
i {
    display: block;
}
.sprite {
    width: 0;
    height: 0;
    position: absolute;
}
.chev {
    width: 12px;
    height: 9px;
    color: #e4e4e4;
}
.chev.dim {
    color: #7c7c7c;
}
.ic-txt {
    font-family: Inter, sans-serif;
    font-size: 17px;
    fill: #707070;
}
.ic-sort {
    font-family: Inter, sans-serif;
    font-weight: 300;
    font-size: 31px;
}
.az-a { fill: #3f6f9c; }
.az-z { fill: #777; }

/* top */
.topbar {
    height: 72px;
    background: #000;
    display: flex;
    justify-content: flex-end;
    padding: 26px 26px 0 0;
}
.dot {
    width: 13px;
    height: 13px;
    border-radius: 50%;
    background: #6466f0;
}
.qat {
    height: 80px;
    background: #292929;
    display: flex;
    align-items: center;
}
.qat-left {
    width: 1202px;
    display: flex;
    align-items: center;
    padding-left: 42px;
}
.autosave {
    font-size: 22px;
    width: 120px;
    color: #d8d8d8;
}
.toggle {
    width: 55px;
    height: 29px;
    border-radius: 15px;
    background: linear-gradient(90deg, #333, #181818);
    display: block;
}
.toggle i {
    width: 26px;
    height: 29px;
    border-radius: 50%;
    background: #fff;
}
.q-home { width: 28px; height: 30px; margin-left: 27px; }
.q-save { width: 28px; height: 28px; margin-left: 27px; }
.q-saveas { width: 30px; height: 30px; margin-left: 25px; }
.q-undo { width: 28px; height: 32px; margin-left: 24px; }
.q-chev { margin-left: 17px; }
.q-redo { width: 28px; height: 32px; margin-left: 23px; }
.q-dots { width: 27px; height: 6px; margin-left: 26px; }
.title {
    width: 1095px;
    display: flex;
    align-items: center;
    font-size: 24px;
    color: #f0f0f0;
    gap: 11px;
}
.t-xls {
    width: 25px;
    height: 29px;
}
.searchbox {
    width: 558px;
    height: 43px;
    border: 2px solid #3a3a3a;
    border-radius: 10px;
    display: flex;
    align-items: center;
    padding-left: 12px;
    gap: 16px;
    font-size: 24.500px;
    font-weight: 500;
    color: #9a9a9a;
}
.s-ic {
    width: 26px;
    height: 28px;
}
.q-people {
    width: 34px;
    height: 32px;
    margin-left: 29px;
}

/* tabs */
.tabs {
    height: 64px;
    background: #292929;
    display: flex;
    padding: 10px 20px 0 22px;
    gap: 49px;
    font-size: 26px;
    font-weight: 500;
    color: #dcdcdc;
}
.tab {
    display: flex;
    flex-direction: column;
    line-height: 30px;
}
.tab::after {
    content: "";
    height: 6px;
    margin-top: 6px;
    border-radius: 3px;
}
.tab.on {
    font-weight: 700;
    color: #f0f0f0;
}
.tab.on::after {
    background: #ddd;
}
.tab-right {
    margin: -6px 0 0 auto;
    display: flex;
    gap: 21px;
    color: #fff;
    font-size: 25px;
}
.btn-comments, .btn-share {
    height: 48px;
    border-radius: 9px;
    display: flex;
    align-items: center;
}
.btn-comments {
    width: 208px;
    background: #545454;
    padding-left: 19px;
    gap: 12px;
}
.btn-share {
    width: 178px;
    background: #40874a;
    padding-left: 21px;
    gap: 10px;
}
.btn-share .chev {
    margin-left: 11px;
}
.b-ic {
    width: 32px;
    height: 32px;
}

/* ribbon */
.ribbon {
    height: 142px;
    background: #292929;
    border-bottom: 2px solid #000;
    display: flex;
    font-size: 21px;
}
.g {
    height: 124px;
    border-right: 2px solid #464646;
    flex: none;
}
.lbl {
    color: #8a8a8a;
    line-height: 24px;
    text-align: center;
}
.lbl.on {
    color: #f0f0f0;
}
.row {
    height: 48px;
    margin-top: 10px;
    display: flex;
    align-items: center;
}
.row + .row {
    margin-top: 16px;
}
.vsep {
    width: 2px;
    height: 36px;
    background: #464646;
}
.tbtn {
    width: 48px;
    height: 48px;
    border-radius: 8px;
    background: #515151;
    display: flex;
    align-items: center;
    justify-content: center;
}
.g-clip {
    width: 210px;
    display: flex;
    padding-left: 34px;
}
.paste {
    width: 92px;
    padding-top: 10px;
}
.paste-top {
    display: flex;
    align-items: center;
    gap: 10px;
}
.i-paste { width: 54px; height: 60px; }
.paste-lbl {
    display: block;
    width: 66px;
    margin-top: 9px;
}
.tools {
    padding-top: 6px;
    display: flex;
    flex-direction: column;
    gap: 12px;
}
.i-cut { width: 21px; height: 32px; margin-left: 6px; }
.tool-row {
    display: flex;
    align-items: center;
    gap: 12px;
}
.i-32 { width: 32px; height: 30px; }
.i-painter { width: 32px; height: 30px; }
.g-font {
    width: 540px;
    padding-left: 20px;
}
.combo {
    height: 48px;
    border-radius: 7px;
    background: #3a3a3a;
    border-bottom: 2px solid #4c4c4c;
    display: flex;
    align-items: center;
    justify-content: space-between;
    padding: 0 12px;
    font-size: 23.500px;
    color: #eee;
}
.w281 { width: 281px; }
.w108 { width: 108px; margin-left: 5px; }
.size-a {
    display: flex;
    font-weight: 300;
    color: #ddd;
}
.size-a span { line-height: 36px; }
.i-caret { width: 10px; height: 7px; margin-top: 6px; }
.grow { font-size: 35px; margin-left: 14px; width: 54px; }
.shrink { font-size: 30px; }
.font-tools {
    display: grid;
    grid-template-columns: 48px 58px 42px 34px 22px 54px 24px 34px 50px 18px 64px 12px;
    justify-items: center;
    align-items: center;
}
.f-b { font-weight: 700; font-size: 24px; }
.f-i { font-family: "Liberation Serif", serif; font-style: italic; font-size: 28px; }
.f-u { font-size: 25px; font-weight: 300; text-decoration: underline; text-underline-offset: 4px; }
.i-borders { width: 30px; height: 32px; }
.i-fill { width: 32px; height: 38px; }
.f-color {
    font-size: 30px;
    font-weight: 300;
    line-height: 32px;
    width: 32px;
    text-align: center;
    border-bottom: 7px solid #e8301f;
}
.g-align {
    width: 323px;
    padding-left: 20px;
}
.align-row {
    display: grid;
    grid-template-columns: 48px 48px 48px 26px 48px 48px;
    column-gap: 4px;
    justify-items: center;
    align-items: center;
}
.chev.left { justify-self: start; margin-left: 2px; }
.i-va { width: 28px; height: 48px; }
.i-ha { width: 28px; height: 28px; }
.i-orient { width: 32px; height: 30px; }
.i-ind { width: 30px; height: 28px; }
.g-wrap {
    width: 279px;
    padding-left: 26px;
}
.wrapline { gap: 12px; }
.wrapline .chev { margin-left: -1px; }
.i-30 { width: 30px; height: 32px; }
.g-num {
    width: 351px;
    padding-left: 19px;
}
.general {
    width: 310px;
    background: #2f2f2f;
    border-bottom-color: #3d3d3d;
    color: #8a8a8a;
}
.general .chev { color: #9a9a9a; }
.num-tools {
    display: grid;
    grid-template-columns: 48px 24px 56px 52px 26px 50px 50px;
    justify-items: center;
    align-items: center;
}
.i-acct { width: 32px; height: 36px; }
.n-pct { font-size: 36px; font-weight: 200; color: #777; }
.n-comma {
    font-family: "Liberation Serif", serif;
    font-weight: 700;
    font-size: 84px;
    line-height: 30px;
    height: 40px;
    margin-top: -40px;
    color: #777;
}
.i-dec { width: 34px; height: 34px; }
.g-styles {
    width: 365px;
    padding-left: 23px;
    display: flex;
}
.big {
    display: flex;
    flex-direction: column;
    align-items: center;
    padding-top: 10px;
}
.big-ic {
    flex: none;
    height: 69px;
    display: flex;
    gap: 9px;
}
.big-ic .chev { margin-top: 24px; }
.big-ic.low { padding-top: 6px; }
.w114 { width: 114px; }
.w84 { width: 84px; }
.w100 { width: 100px; }
.w96 { width: 96px; }
.w82 { width: 82px; }
.i-cond { width: 56px; height: 44px; }
.i-table { width: 60px; height: 54px; }
.g-cells {
    width: 194px;
    padding-left: 26px;
}
.cellrow {
    height: 44px;
    display: flex;
    align-items: center;
    gap: 12px;
}
.g-cells .chev { margin-left: -2px; }
.g-edit {
    width: 310px;
    display: flex;
}
.edit-small {
    width: 88px;
    padding-left: 26px;
}
.i-sort { width: 56px; height: 54px; margin-top: 2px; }
.i-find { width: 58px; height: 60px; }
.g-addins {
    width: 129px;
}
.i-addins { width: 58px; height: 58px; }
.g-last {
    width: 239px;
    height: 124px;
    border: 0;
    padding-left: 15px;
    display: flex;
}
.i-analyze { width: 64px; height: 64px; margin-top: -4px; }
.i-copilot { width: 62px; height: 52px; margin-top: 2px; }

/* formula bar */
.fbar {
    height: 52px;
    background: #262626;
    display: flex;
    align-items: center;
    position: relative;
}
.namebox {
    width: 171px;
    height: 51px;
    border: 2px solid #3c3c3c;
    display: flex;
    align-items: center;
    padding-left: 18px;
    font-size: 23px;
    color: #eee;
}
.spin {
    margin-left: 17px;
    display: flex;
    flex-direction: column;
    gap: 6px;
}
.up, .dn {
    width: 0;
    height: 0;
    border-left: 7px solid transparent;
    border-right: 7px solid transparent;
}
.up { border-bottom: 12px solid #9a9a9a; }
.dn { border-top: 12px solid #9a9a9a; }
.fb-x, .fb-ok {
    color: #5f5f5f;
    font-size: 27px;
    font-family: "DejaVu Sans", sans-serif;
}
.fb-x { margin-left: 29px; }
.fb-ok { margin-left: 36px; }
.fb-fx {
    font-family: "Liberation Serif", serif;
    font-style: italic;
    font-size: 34px;
    color: #888;
    margin-left: 35px;
}
.fb-input {
    position: absolute;
    left: 361px;
    right: 0;
    top: 7px;
    height: 39px;
    background: #393939;
    border: 2px solid #444;
    border-radius: 5px 0 0 5px;
    display: flex;
    justify-content: flex-end;
}
.fb-drop {
    width: 46px;
    background: #2a2a2a;
    display: flex;
    align-items: center;
    justify-content: center;
}
.splitline {
    height: 6px;
    background: linear-gradient(#8a8a8a, #eee 40%, #eee 60%, #8a8a8a);
}

/* sheet */
.sheet {
    height: 1398px;
    position: relative;
    overflow: hidden;
    background: #fff;
}
.grid {
    width: 2940px;
    table-layout: fixed;
    border-collapse: separate;
    border-spacing: 0;
    font-family: "Liberation Serif", "Times New Roman", serif;
    font-size: 18px;
    line-height: 1;
    color: #000;
}
.c-rn { width: 40px; }
.c-a { width: 47px; }
.c-c { width: 120px; }
.c-f { width: 138px; }
.c-i { width: 180px; }
.c-l { width: 130px; }
.c-m { width: 492px; }
.c-n { width: 567px; }
.c-o { width: 217px; }
.c-q { width: 246px; }
.c-r { width: 240px; }
.c-s { width: 198px; }
.c-t { width: 235px; }
.c-u { width: 90px; }
.grid td, .grid th {
    padding: 0;
    overflow: hidden;
    white-space: nowrap;
}
.grid thead th {
    height: 38px;
    background: #181818;
    border-right: 2px solid #5c5c5c;
    border-bottom: 2px solid #b5b5b5;
    color: #fff;
    font: 18px/1 "Liberation Sans", sans-serif;
    text-align: center;
    padding-left: 3px;
}
.grid thead th.sel {
    border-right: 5px solid #3d7a50;
    padding-left: 5px;
}
.grid thead th.corner {
    border-right: 2px solid #b5b5b5;
    vertical-align: middle;
    padding-left: 0;
}
.i-corner {
    width: 25px;
    height: 24px;
    margin-left: 10px;
}
.grid tbody th {
    background: #111;
    color: #fff;
    font: 18px/1 "Liberation Sans", sans-serif;
    text-align: center;
    vertical-align: bottom;
    padding: 0 2px 0 0;
    border-bottom: 2px solid #666;
}
.blank td {
    border-right: 2px solid #d4d4d4;
    border-bottom: 2px solid #d4d4d4;
}
.r1 th, .r1 td { height: 23px; }
.r2 th, .r2 td { height: 22px; }
.r3 th, .r3 td {
    height: 29px;
}
.r3 td {
    border-bottom: 4px solid #000;
}
.r2 .proof {
    background: #ef732c;
    text-align: center;
    font-weight: 700;
    line-height: 14px;
    padding-top: 4px;
    border-right: 0;
    border-bottom: 4px solid #000;
}
.r2 .proof.left {
    text-align: left;
    padding-left: 12px;
}
.r2 .topline {
    border-bottom: 4px solid #000;
}
.r3 .green {
    background-color: #75ff4e;
    color: #e8352a;
    font-weight: 700;
    font-size: 18px;
    line-height: 14px;
    letter-spacing: 0.200px;
    text-align: right;
    padding-right: 10px;
    vertical-align: bottom;
    border-right: 2px solid #000;
}
.r3 .credit {
    background: #f19bc9;
    font-weight: 700;
    line-height: 14px;
    text-align: center;
    vertical-align: bottom;
}
.tri {
    background-image: linear-gradient(135deg, #37791f 50%, transparent 50%);
    background-size: 11px 11px;
    background-repeat: no-repeat;
}
.heads th, .heads td {
    height: 84px;
}
.heads td {
    background: #bebebe;
    border-right: 4px solid #000;
    border-bottom: 2px solid #8a8a8a;
    font-size: 17px;
    font-weight: 700;
    line-height: 24px;
    text-align: center;
    padding: 3px 0 0 2px;
    position: relative;
}
.heads td:nth-child(2) {
    vertical-align: top;
    padding-top: 20px;
}
.heads .left {
    text-align: left;
    padding-left: 4px;
}
.heads .non {
    padding-left: 60px;
    border-right: 0;
}
.heads .wtax {
    background: #eb3069;
}
.fbtn {
    position: absolute;
    right: 0;
    bottom: 2px;
    width: 32px;
    height: 34px;
    background: linear-gradient(#fff 70%, #e4e4e4);
    border: 2px solid #8c8c8c;
    border-width: 2px 0 0 2px;
    border-radius: 3px 0 0 3px;
}
.fbtn::after {
    content: "";
    position: absolute;
    left: 8px;
    top: 11px;
    border-left: 8px solid transparent;
    border-right: 8px solid transparent;
    border-top: 11px solid #808080;
}
.wtax .fbtn {
    border-color: #a01c46;
}
.grid tbody .redrow th, .redrow td {
    height: 16px;
    line-height: 4px;
    vertical-align: top;
    padding-bottom: 0;
}
.redrow td {
    background: #eb3323;
    border-bottom: 2px solid #000;
}
.grid .redrow .redcount {
    font-weight: 700;
    text-align: right;
    padding-right: 8px;
    border-bottom-width: 3px;
}
.month th, .month td {
    height: 27px;
}
.month td {
    background-color: #75fbfd;
    border-right: 2px solid #000;
    border-bottom: 2px solid #000;
    color: #8d3b17;
    font-weight: 700;
    font-size: 17px;
    letter-spacing: 1px;
    padding: 8px 0 0 4px;
}
.month td:last-child {
    border-right: 0;
}
.grid .month .ctr {
    text-align: center;
    border-right-width: 1px;
}
.grid .month .cnt {
    background: #bebebe;
    color: #000;
    text-align: center;
    vertical-align: bottom;
    padding: 0;
    letter-spacing: 0;
    border-bottom-width: 3px;
}
.data th, .data td {
    height: 26px;
}
.data td {
    background-color: #fff;
    border-right: 2px solid #000;
    border-bottom: 2px solid #000;
    padding: 6px 0 0 5px;
    letter-spacing: 0.400px;
}
.data td:nth-child(2) {
    background: #bebebe;
    font-weight: 700;
    text-align: center;
    padding: 0;
    letter-spacing: 0;
    vertical-align: bottom;
    border-bottom-width: 3px;
}
.data td:nth-child(3) {
    text-align: right;
    padding-right: 5px;
}
.data td:nth-child(7) {
    letter-spacing: -0.450px;
}
.data td:nth-child(8) {
    letter-spacing: 0.250px;
}
.data td.caps {
    letter-spacing: -0.300px;
}
.data td:nth-child(9) {
    letter-spacing: 0.900px;
}
.data td.indent {
    padding-left: 28px;
}
.data td:last-child {
    background: #c49bf8;
    border-right: 0;
}
.tall th, .tall td {
    height: 28px;
}
.pink td {
    background-color: #f19bc9;
    border-right-color: #c3b4bd;
}
.grid .pink td:last-child {
    background-color: #f19bc9;
}
.grid tbody .stub th, .stub td {
    height: 8px;
    font-size: 0;
    padding: 0;
}

/* text box */
.textbox {
    position: absolute;
    left: 1930px;
    top: 241px;
    width: 916px;
    height: 1350px;
    background: #fff;
    border: 3px solid #777;
    display: flex;
    align-items: center;
    justify-content: center;
}
.confidential {
    font-family: Lato, "Open Sans", sans-serif;
    font-weight: 700;
    font-size: 94px;
    color: #e8352a;
    line-height: 1;
    white-space: nowrap;
    transform: scaleX(0.915);
}
.hd {
    position: absolute;
    width: 16px;
    height: 16px;
    background: #fff;
    border: 1px solid #8a8a8a;
    border-radius: 2px;
}
.tl { left: -10px; top: -10px; }
.tc { left: 448px; top: -10px; }
.tr { right: -10px; top: -10px; }
.ml { left: -10px; top: 665px; }
.mr { right: -10px; top: 665px; }
.stem {
    position: absolute;
    left: 455px;
    top: -36px;
    width: 2px;
    height: 26px;
    background: #4f6a6a;
}
.rot {
    position: absolute;
    left: 445px;
    top: -57px;
    width: 22px;
    height: 23px;
    border-radius: 50%;
    background: #fff;
    display: flex;
    align-items: center;
    justify-content: center;
}
.i-rot { width: 16px; height: 16px; }

/* sheet tabs */
.sheettabs {
    height: 53px;
    background: #212121;
    border-top: 3px solid #6a6a6a;
    border-bottom: 1px solid #000;
    display: flex;
    font: 24.500px "Liberation Sans", Arial, sans-serif;
    -webkit-text-stroke: 0.300px currentColor;
    color: #000;
}
.nav {
    width: 120px;
    background: #303030;
    display: flex;
    align-items: center;
    padding-left: 30px;
    gap: 32px;
}
.arr-l, .arr-r {
    width: 0;
    height: 0;
    border-top: 10px solid transparent;
    border-bottom: 10px solid transparent;
}
.arr-l { border-right: 14px solid #6f6f6f; }
.arr-r { border-left: 14px solid #bdbdbd; }
.stab {
    height: 40px;
    margin-top: 3px;
    display: flex;
    align-items: center;
    justify-content: center;
    white-space: nowrap;
}
.w-sales { width: 144px; margin-left: 8px; background: #dde9ef; }
.active {
    width: 419px;
    height: 45px;
    margin: -1px 8px 0 9px;
    padding-top: 2px;
    background: linear-gradient(#fff, #e6eef2);
    color: #3f8655;
    -webkit-text-stroke: 0.600px currentColor;
    border-bottom: 3px solid #fff;
}
.w-nonvat { width: 342px; background: #a3c9da; }
.w-new { width: 406px; background: #4a8298; color: #fff; }
.w-main { width: 231px; background: #33596a; color: #fff; }
.w-bir { width: 154px; background: #bddbe5; }
.tabsep {
    width: 2px;
    height: 38px;
    margin: 0 5px 0 6px;
    background: #555;
}
.tabsep.flat {
    margin: 0;
}
.ptab {
    height: 38px;
    margin-top: 3px;
    display: flex;
    align-items: center;
    justify-content: center;
    color: #808080;
    white-space: nowrap;
}
.w168 { width: 162px; }
.w214 { width: 212px; }
.w256 { width: 254px; }
.w276 { width: 274px; }
.w76 { width: 74px; }
.fade {
    justify-content: flex-start;
    padding-left: 41px;
    overflow: hidden;
    position: relative;
}
.fade::after {
    content: "";
    position: absolute;
    right: 0;
    top: 0;
    bottom: 0;
    width: 70px;
    background: linear-gradient(90deg, rgba(33,33,33,0), #2c2c2c);
}
.plus {
    font-size: 38px;
    font-weight: 700;
    color: #9a9a9a;
}

/* status bar */
.status {
    height: 45px;
    background: linear-gradient(#4b4b4b, #3b3b3b);
    display: flex;
    align-items: center;
    font-size: 23.500px;
    color: #d8d8d8;
}
.st-ready { margin-left: 50px; }
.i-access { width: 32px; height: 36px; margin-left: 38px; }
.st-acc { margin-left: 10px; font-size: 24px; }
.views {
    display: flex;
    height: 45px;
    margin: 0 13px 0 auto;
}
.view {
    width: 71px;
    display: flex;
    align-items: center;
    justify-content: center;
}
.view.on {
    width: 74px;
    background: #5a5a5a;
}
.i-view { width: 28px; height: 28px; }
.zm {
    font-size: 30px;
    font-weight: 700;
    color: #fff;
    width: 24px;
    text-align: center;
}
.slider {
    width: 199px;
    height: 14px;
    margin: 0 12px 0 9px;
    border-radius: 7px;
    background: #7e7e7e;
    position: relative;
}
.slider i {
    position: absolute;
    left: 69px;
    top: -9px;
    width: 32px;
    height: 32px;
    border-radius: 50%;
    background: #a6a6a6;
}
.pct {
    margin: 0 50px 0 31px;
}
```
